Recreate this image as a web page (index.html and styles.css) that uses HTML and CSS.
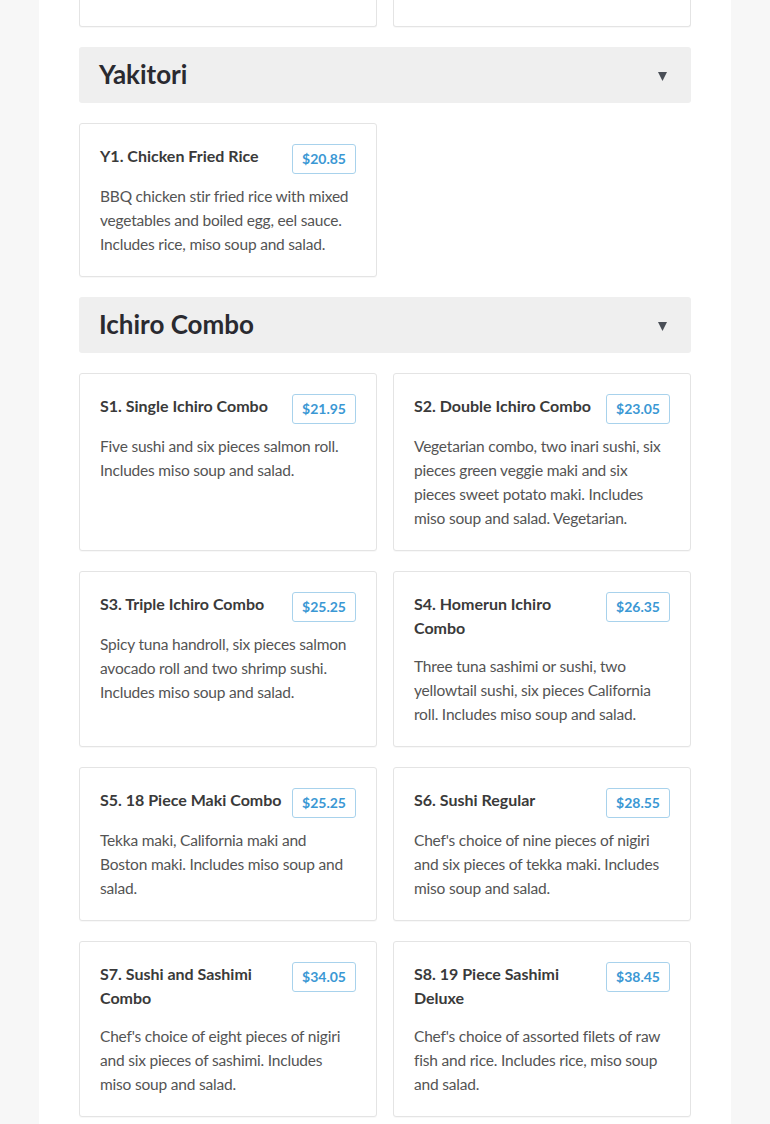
FILE: index.html
```html
<!DOCTYPE html>
<html lang="en">
<head>
<meta charset="utf-8">
<title>Menu</title>
<link rel="stylesheet" href="styles.css">
</head>
<body>
<main class="menu">
  <div class="grid">
    <div class="card card-tail"></div>
    <div class="card card-tail"></div>
  </div>

  <section class="section">
    <div class="section-head">
      <h2 class="section-title">Yakitori</h2>
      <svg class="caret" width="9" height="9" viewBox="0 0 9 9"><polygon points="0,0 9,0 4.5,9" fill="#4a4f57"/></svg>
    </div>
    <div class="grid">
      <article class="card">
        <div class="card-head"><h3 class="item-name">Y1. Chicken Fried Rice</h3><span class="price">$20.85</span></div>
        <p class="item-desc">BBQ chicken stir fried rice with mixed vegetables and boiled egg, eel sauce. Includes rice, miso soup and salad.</p>
      </article>
    </div>
  </section>

  <section class="section">
    <div class="section-head">
      <h2 class="section-title">Ichiro Combo</h2>
      <svg class="caret" width="9" height="9" viewBox="0 0 9 9"><polygon points="0,0 9,0 4.5,9" fill="#4a4f57"/></svg>
    </div>
    <div class="grid">
      <article class="card">
        <div class="card-head"><h3 class="item-name">S1. Single Ichiro Combo</h3><span class="price">$21.95</span></div>
        <p class="item-desc">Five sushi and six pieces salmon roll. Includes miso soup and salad.</p>
      </article>
      <article class="card">
        <div class="card-head"><h3 class="item-name">S2. Double Ichiro Combo</h3><span class="price">$23.05</span></div>
        <p class="item-desc">Vegetarian combo, two inari sushi, six pieces green veggie maki and six pieces sweet potato maki. Includes miso soup and salad. Vegetarian.</p>
      </article>
      <article class="card">
        <div class="card-head"><h3 class="item-name">S3. Triple Ichiro Combo</h3><span class="price">$25.25</span></div>
        <p class="item-desc">Spicy tuna handroll, six pieces salmon avocado roll and two shrimp sushi. Includes miso soup and salad.</p>
      </article>
      <article class="card">
        <div class="card-head"><h3 class="item-name">S4. Homerun Ichiro Combo</h3><span class="price">$26.35</span></div>
        <p class="item-desc">Three tuna sashimi or sushi, two yellowtail sushi, six pieces California roll. Includes miso soup and salad.</p>
      </article>
      <article class="card">
        <div class="card-head"><h3 class="item-name">S5. 18 Piece Maki Combo</h3><span class="price">$25.25</span></div>
        <p class="item-desc">Tekka maki, California maki and Boston maki. Includes miso soup and salad.</p>
      </article>
      <article class="card">
        <div class="card-head"><h3 class="item-name">S6. Sushi Regular</h3><span class="price">$28.55</span></div>
        <p class="item-desc">Chef's choice of nine pieces of nigiri and six pieces of tekka maki. Includes miso soup and salad.</p>
      </article>
      <article class="card">
        <div class="card-head"><h3 class="item-name">S7. Sushi and Sashimi Combo</h3><span class="price">$34.05</span></div>
        <p class="item-desc">Chef's choice of eight pieces of nigiri and six pieces of sashimi. Includes miso soup and salad.</p>
      </article>
      <article class="card">
        <div class="card-head"><h3 class="item-name">S8. 19 Piece Sashimi Deluxe</h3><span class="price">$38.45</span></div>
        <p class="item-desc">Chef's choice of assorted filets of raw fish and rice. Includes rice, miso soup and salad.</p>
      </article>
    </div>
  </section>
</main>
</body>
</html>
```

FILE: styles.css
```css
* { box-sizing: border-box; }

html, body {
  margin: 0;
  padding: 0;
}

body {
  background: #f7f7f7;
  font-family: Lato, "Open Sans", "Liberation Sans", sans-serif;
  color: #333;
}

.menu {
  width: 692px;
  margin-left: 39px;
  background: #fff;
  padding: 0 40px 40px;
  min-height: 1124px;
}

.grid {
  display: grid;
  grid-template-columns: 1fr 1fr;
  gap: 20px 16px;
}

.section {
  margin-top: 20px;
}

.section-head {
  display: flex;
  align-items: center;
  justify-content: space-between;
  height: 56px;
  padding: 0 24px 0 20px;
  background: #efefef;
  border-radius: 3px;
  margin-bottom: 20px;
}

.section-title {
  margin: 0;
  font-size: 26px;
  line-height: 30px;
  font-weight: 700;
  color: #2a2a30;
  padding-bottom: 2px;
}

.caret {
  display: block;
  margin-top: 2px;
}

.card {
  background: #fff;
  border: 1px solid #e4e4e4;
  border-radius: 3px;
  padding: 20px;
  box-shadow: 0 1px 1px rgba(0, 0, 0, 0.03);
}

.card-tail {
  height: 27px;
  border-top: none;
  border-top-left-radius: 0;
  border-top-right-radius: 0;
  padding: 0;
}

.card-head {
  display: flex;
  align-items: flex-start;
  justify-content: space-between;
  gap: 8px;
}

.item-name {
  margin: 0 0 4px;
  font-size: 16px;
  line-height: 24px;
  font-weight: 700;
  color: #3a3a3a;
}

.price {
  flex: none;
  display: inline-block;
  height: 30px;
  line-height: 28px;
  padding: 0 9px;
  border: 1px solid #a8d2ec;
  border-radius: 3px;
  font-size: 14px;
  font-weight: 700;
  color: #3b98d4;
}

.item-desc {
  margin: 10px 0 0;
  font-size: 15.5px;
  line-height: 24px;
  letter-spacing: -0.2px;
  color: #545454;
}
```
